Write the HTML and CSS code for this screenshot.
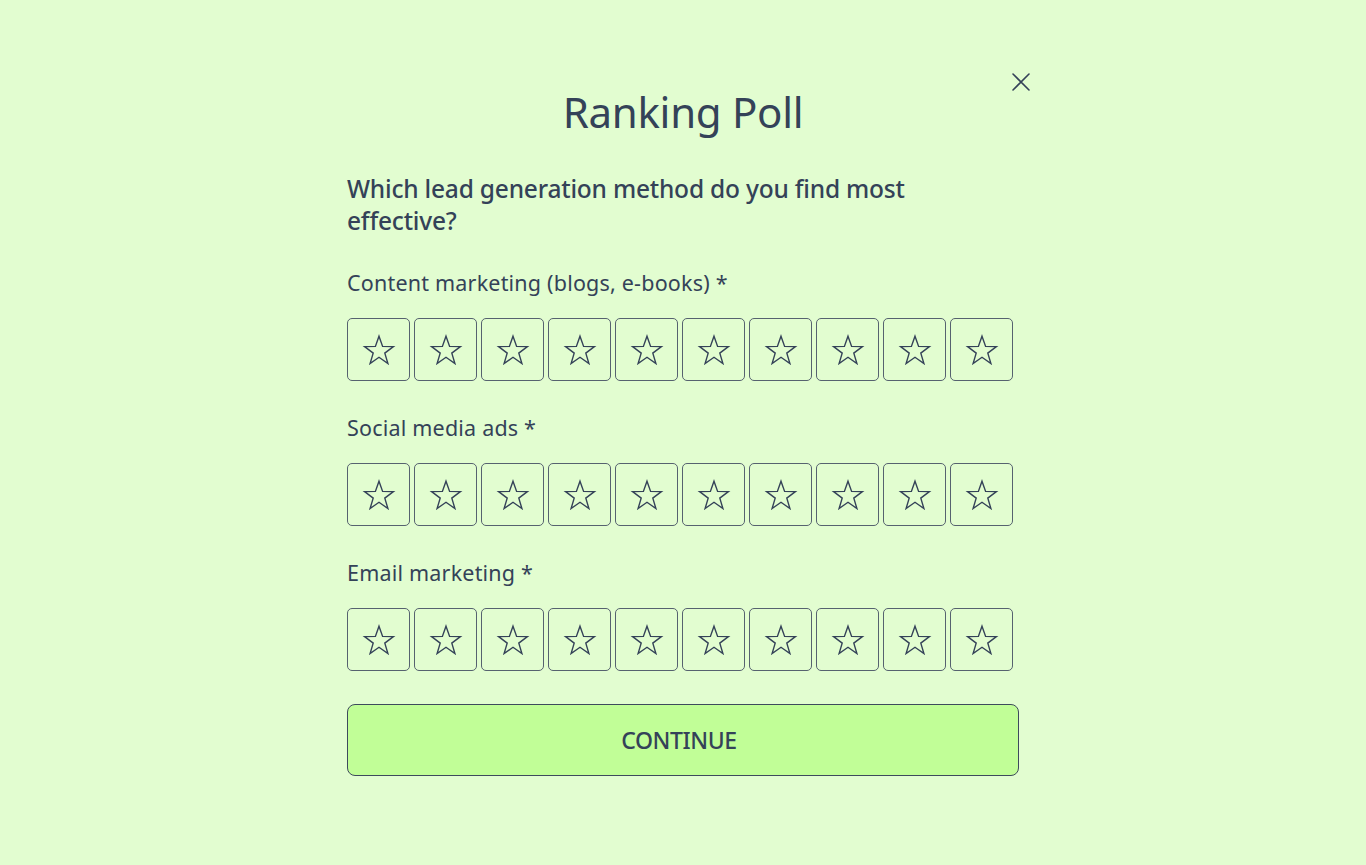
FILE: index.html
```html
<!DOCTYPE html>
<html>
<head>
<meta charset="utf-8">
<link rel="stylesheet" href="styles.css">
</head>
<body>
<div class="poll">
  <button class="close" aria-label="Close">
    <svg width="20" height="20" viewBox="0 0 20 20"><path d="M2 2L18 18M18 2L2 18" stroke="#344258" stroke-width="1.6" stroke-linecap="round"/></svg>
  </button>
  <h1 class="title">Ranking Poll</h1>
  <p class="question">Which lead generation method do you find most effective?</p>

  <div class="item">
    <div class="label">Content marketing (blogs, e-books) *</div>
    <div class="stars" id="r1"></div>
  </div>
  <div class="item">
    <div class="label">Social media ads *</div>
    <div class="stars" id="r2"></div>
  </div>
  <div class="item">
    <div class="label">Email marketing *</div>
    <div class="stars" id="r3"></div>
  </div>

  <button class="continue">CONTINUE</button>
</div>
<script>
  var star = '<svg width="34" height="32" viewBox="0 0 34 32"><path d="M17 2.2L20.6 12.4L31.4 12.6L22.8 19.1L25.9 29.5L17 23.3L8.1 29.5L11.2 19.1L2.6 12.6L13.4 12.4Z" fill="none" stroke="#344258" stroke-width="1.4" stroke-linejoin="miter"/></svg>';
  ['r1','r2','r3'].forEach(function(id){
    var el = document.getElementById(id), h='';
    for (var i=0;i<10;i++) h += '<div class="box">'+star+'</div>';
    el.innerHTML = h;
  });
</script>
</body>
</html>
```
FILE: styles.css
```css
html, body {
  margin: 0;
  padding: 0;
  background: #e2fdd0;
  height: 100%;
}
body {
  font-family: "Noto Sans", "Open Sans", sans-serif;
  color: #344258;
}
.poll {
  position: relative;
  width: 672px;
  margin: 0 auto;
  padding-top: 88px;
  display: flex;
  flex-direction: column;
}
.close {
  position: absolute;
  right: -12px;
  top: 72px;
  background: none;
  border: none;
  padding: 0;
  width: 20px;
  height: 20px;
  cursor: pointer;
}
.title {
  margin: 0;
  font-size: 42px;
  font-weight: 400;
  line-height: 48px;
  text-align: center;
  letter-spacing: -0.3px;
}
.question {
  margin: 37px 0 0 0;
  font-size: 24.5px;
  line-height: 32px;
  font-weight: 500;
  width: 600px;
  letter-spacing: -0.2px;
}
.item {
  margin-top: 32px;
}
.item + .item {
  margin-top: 33px;
}
.label {
  font-size: 21.5px;
  line-height: 28px;
  font-weight: 400;
  letter-spacing: 0.2px;
}
.stars {
  display: flex;
  gap: 4px;
  margin-top: 21px;
}
.box {
  width: 61px;
  height: 61px;
  border: 1px solid #56626f;
  border-radius: 5px;
  display: flex;
  align-items: center;
  justify-content: center;
}
.continue {
  margin-top: 33px;
  height: 72px;
  width: 672px;
  padding: 0 8px 0 0;
  background: #c1fe97;
  border: 1px solid #3d4a5c;
  border-radius: 8px;
  font-family: inherit;
  font-size: 23px;
  font-weight: 500;
  color: #344258;
  letter-spacing: -0.4px;
  cursor: pointer;
}
```
